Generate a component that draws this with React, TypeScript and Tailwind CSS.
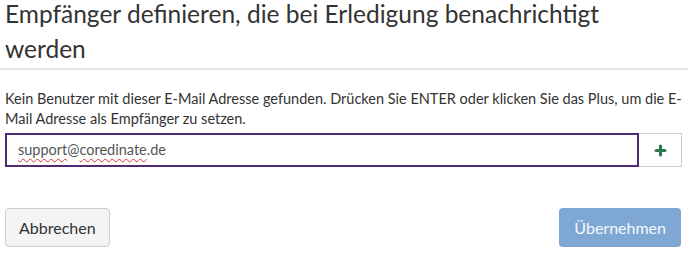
import { Plus } from 'lucide-react'

export default function App() {
  return (
    <div className="w-[688px] h-[253px] bg-white text-[#333] overflow-hidden" style={{ fontFamily: 'Lato, "Open Sans", sans-serif' }}>
      <div className="px-[5px] pb-[2px] border-b-2 border-[#e5e5e5]">
        <h1 className="-mt-[4px] text-[24.5px] leading-[35px] font-normal text-[#333]">
          Empfänger definieren, die bei Erledigung benachrichtigt werden
        </h1>
      </div>

      <div className="px-[5px] pt-[19px]">
        <p className="text-[14.5px] leading-[20px] text-[#333]">
          Kein Benutzer mit dieser E-Mail Adresse gefunden. Drücken Sie ENTER oder klicken Sie das Plus, um die E-Mail Adresse als Empfänger zu setzen.
        </p>

        <div className="flex mt-[4px] pr-[1px]">
          <div className="flex-1 h-[34px] border-2 border-[#4f2a6e] px-[11px] flex items-center text-[14.5px] text-[#555]">
            <span className="underline decoration-wavy decoration-[#d33] decoration-1 underline-offset-[3px]">support</span>
            <span>@</span>
            <span className="underline decoration-wavy decoration-[#d33] decoration-1 underline-offset-[3px]">coredinate</span>
            <span>.de</span>
          </div>
          <button className="w-[43px] h-[34px] border border-l-0 border-[#ccc] bg-white flex items-center justify-center">
            <Plus className="w-[15px] h-[15px] text-[#2f7a4c]" strokeWidth={5} />
          </button>
        </div>

        <div className="flex justify-between items-center mt-[41px] pr-[2px]">
          <button className="h-[39px] px-[13px] bg-[#f4f4f4] border border-[#ccc] rounded-[4px] text-[16px] text-[#333]">
            Abbrechen
          </button>
          <button className="h-[39px] px-[15px] bg-[#7fa7d4] rounded-[4px] text-[16px] text-[#f4f8fc]">
            Übernehmen
          </button>
        </div>
      </div>
    </div>
  )
}
